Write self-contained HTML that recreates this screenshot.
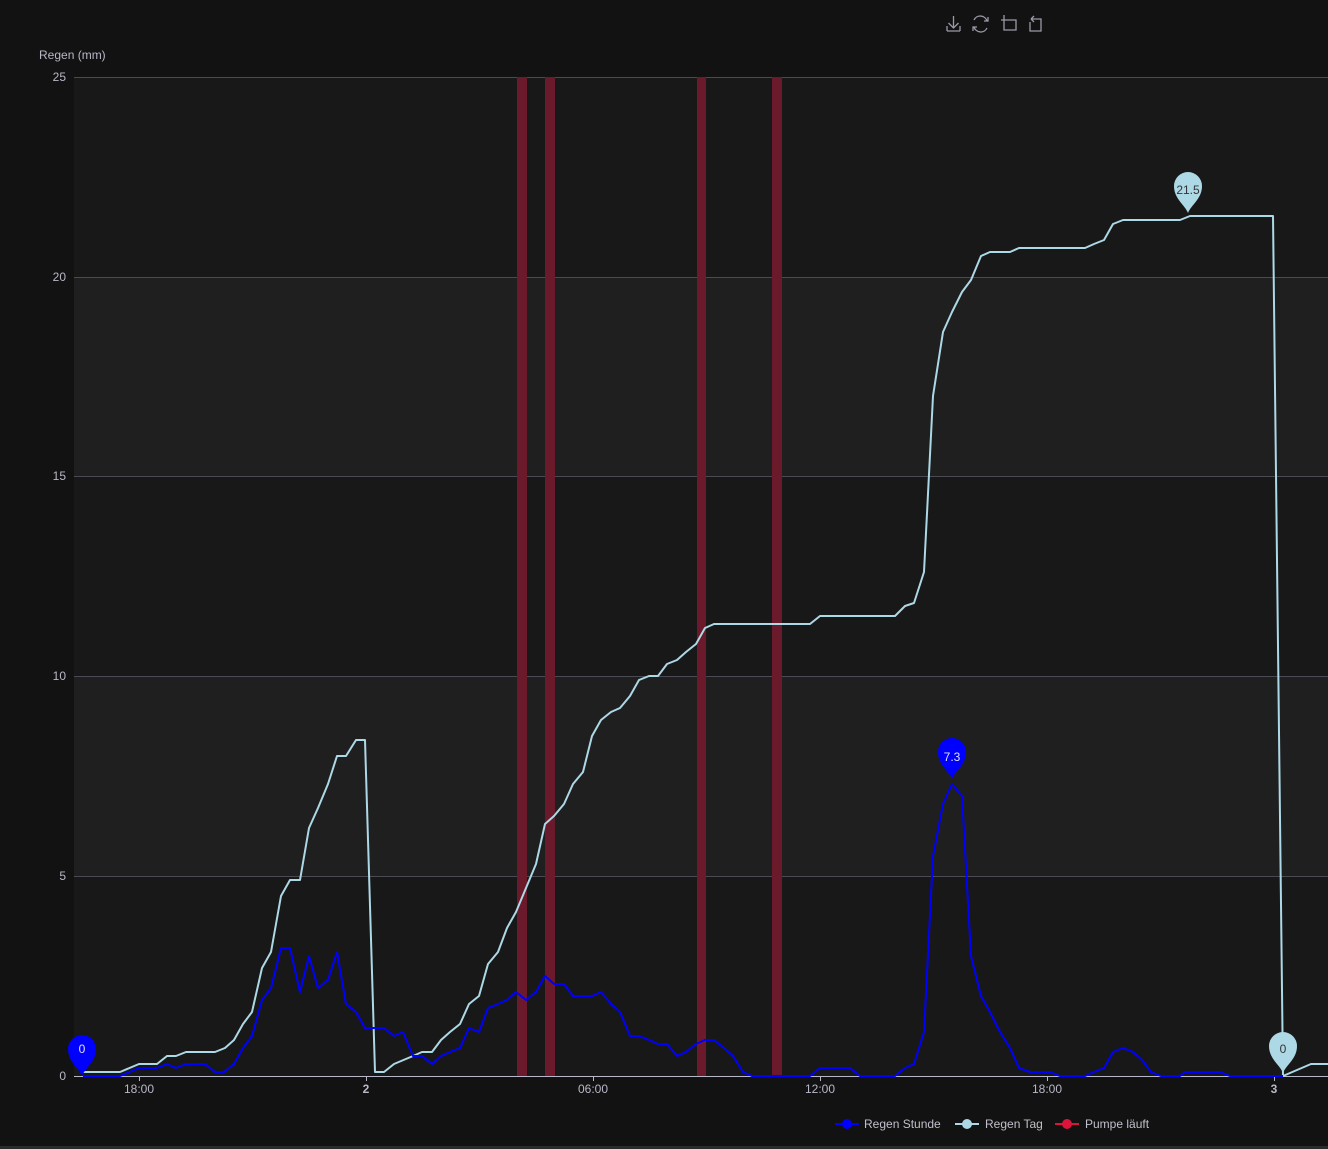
<!DOCTYPE html>
<html><head><meta charset="utf-8"><style>
html,body{margin:0;padding:0;background:#121212;}
svg{display:block;font-family:"Liberation Sans",sans-serif;}
</style></head><body>
<svg width="1328" height="1149" viewBox="0 0 1328 1149" xmlns="http://www.w3.org/2000/svg">
<rect width="1328" height="1149" fill="#121212"/>
<rect x="74" y="77" width="1254" height="200" fill="#181818"/>
<rect x="74" y="277" width="1254" height="200" fill="#1f1f1f"/>
<rect x="74" y="477" width="1254" height="200" fill="#181818"/>
<rect x="74" y="677" width="1254" height="200" fill="#1f1f1f"/>
<rect x="74" y="877" width="1254" height="199" fill="#181818"/>
<g stroke="#4a4a55" stroke-width="1">
<line x1="74" y1="77.5" x2="1328" y2="77.5"/>
<line x1="74" y1="277.5" x2="1328" y2="277.5"/>
<line x1="74" y1="476.5" x2="1328" y2="476.5"/>
<line x1="74" y1="676.5" x2="1328" y2="676.5"/>
<line x1="74" y1="876.5" x2="1328" y2="876.5"/>
</g>
<g fill="#6a1a2a">
<rect x="517" y="77" width="10" height="999"/>
<rect x="545" y="77" width="10" height="999"/>
<rect x="697" y="77" width="9" height="999"/>
<rect x="772" y="77" width="10" height="999"/>
</g>
<line x1="74" y1="1076.5" x2="1328" y2="1076.5" stroke="#b8b8c8" stroke-width="1"/>
<g stroke="#b8b8c8"><line x1="139.5" y1="1076" x2="139.5" y2="1081"/><line x1="366.5" y1="1076" x2="366.5" y2="1081"/><line x1="593.5" y1="1076" x2="593.5" y2="1081"/><line x1="820.5" y1="1076" x2="820.5" y2="1081"/><line x1="1047.5" y1="1076" x2="1047.5" y2="1081"/><line x1="1274.5" y1="1076" x2="1274.5" y2="1081"/></g>
<g fill="#b8b8c8" font-size="12" text-anchor="middle">
<text x="139" y="1093">18:00</text>
<text x="366" y="1093" font-weight="bold">2</text>
<text x="593" y="1093">06:00</text>
<text x="820" y="1093">12:00</text>
<text x="1047" y="1093">18:00</text>
<text x="1274" y="1093" font-weight="bold">3</text>
</g>
<g fill="#b8b8c8" font-size="12" text-anchor="end">
<text x="66" y="81">25</text>
<text x="66" y="281">20</text>
<text x="66" y="480">15</text>
<text x="66" y="680">10</text>
<text x="66" y="880">5</text>
<text x="66" y="1080">0</text>
</g>
<text x="39" y="59" fill="#b8b8c8" font-size="12">Regen (mm)</text>
<polyline fill="none" stroke="#add8e6" stroke-width="2" stroke-linejoin="round" points="83,1072 120,1072 139,1064 157,1064 167,1056 176,1056 186,1052 215,1052 225,1048 234,1040 243,1024 252,1012 262,968 271,952 281,896 290,880 300,880 309,828 318,808 328,784 337,756 346,756 356,740 365,740 375,1072 384,1072 394,1064 413,1056 422,1052 432,1052 441,1040 450,1032 460,1024 469,1004 479,996 488,964 498,952 507,928 516,912 526,888 536,864 545,824 554,816 564,804 573,784 583,772 592,736 601,720 611,712 620,708 630,696 639,680 649,676 658,676 667,664 677,660 686,652 696,644 705,628 714,624 810,624 820,616 895,616 905,606 914,603 924,572 933,396 943,332 952,312 962,292 971,280 981,256 990,252 1010,252 1019,248 1085,248 1094,244 1104,240 1113,224 1123,220 1180,220 1190,216 1273,216 1283,1076 1311,1064 1328,1064"/>
<polyline fill="none" stroke="#0000ff" stroke-width="2" stroke-linejoin="round" points="83,1076 120,1076 139,1068 157,1068 167,1064 176,1068 186,1064 205,1064 215,1072 224,1072 234,1064 243,1048 252,1036 262,1000 271,988 281,948 290,948 300,992 309,956 318,988 328,980 337,952 346,1004 356,1012 365,1028 375,1028 384,1028 394,1036 403,1032 413,1056 422,1056 432,1064 441,1056 450,1052 460,1048 469,1028 479,1032 488,1008 498,1004 507,1000 516,992 526,1000 536,992 545,976 554,984 564,984 573,996 583,996 592,996 601,992 611,1004 620,1012 630,1036 639,1036 649,1040 658,1044 667,1044 677,1056 686,1052 696,1044 705,1040 714,1040 724,1048 733,1056 743,1072 752,1076 810,1076 820,1068 850,1068 860,1076 895,1076 905,1068 914,1064 924,1032 933,856 943,804 952,784 962,796 971,956 981,996 990,1012 1000,1032 1010,1048 1019,1068 1030,1072 1050,1072 1060,1076 1085,1076 1094,1072 1104,1068 1113,1052 1123,1048 1133,1052 1142,1060 1151,1072 1161,1076 1180,1076 1185,1072 1220,1072 1230,1076 1283,1076"/>
<defs><path id="pin" d="M0,0 C-3,-8 -14,-14 -14,-27 A14,14 0 1 1 14,-27 C14,-14 3,-8 0,0 Z"/></defs>
<use href="#pin" x="82" y="1076" fill="#0000ff"/>
<text x="82" y="1053" fill="#e0e0ff" font-size="12" text-anchor="middle">0</text>
<use href="#pin" x="952" y="779" fill="#0000ff"/>
<text x="952" y="761" fill="#e0e0ff" font-size="12" text-anchor="middle">7.3</text>
<use href="#pin" x="1188" y="213" fill="#add8e6"/>
<text x="1188" y="194" fill="#333" font-size="12" text-anchor="middle">21.5</text>
<use href="#pin" x="1283" y="1073" fill="#add8e6"/>
<text x="1283" y="1053" fill="#333" font-size="12" text-anchor="middle">0</text>
<g stroke="#9a9aa8" stroke-width="1.3" fill="none">
<path d="M947,31 H960 M947,26 V31 M960,26 V31 M953.5,16 V28 M948.5,23 L953.5,28 L958.5,23"/>
<path d="M974,20 A7,7 0 0 1 987,21 M987,28 A7,7 0 0 1 974,27 M984,21 H988 V17 M977,27 H973 V31"/>
<path d="M1004,17 V30 H1016 V20 H1001 M1004,17 V15"/>
<path d="M1031,19 H1041 V31 H1030 V22 M1031,19 L1034,16 M1031,19 L1034,22"/>
</g>
<line x1="835" y1="1124" x2="859" y2="1124" stroke="#0000ff" stroke-width="2"/><circle cx="847" cy="1124" r="5" fill="#0000ff"/>
<text x="864" y="1128" fill="#c0c0cc" font-size="12">Regen Stunde</text>
<line x1="955" y1="1124" x2="979" y2="1124" stroke="#add8e6" stroke-width="2"/><circle cx="967" cy="1124" r="5" fill="#add8e6"/>
<text x="985" y="1128" fill="#c0c0cc" font-size="12">Regen Tag</text>
<line x1="1055" y1="1124" x2="1079" y2="1124" stroke="#dc143c" stroke-width="2"/><circle cx="1067" cy="1124" r="5" fill="#dc143c"/>
<text x="1085" y="1128" fill="#c0c0cc" font-size="12">Pumpe läuft</text>
<rect x="0" y="1146" width="1328" height="3" fill="#2a2a2a"/>
</svg>
</body></html>
